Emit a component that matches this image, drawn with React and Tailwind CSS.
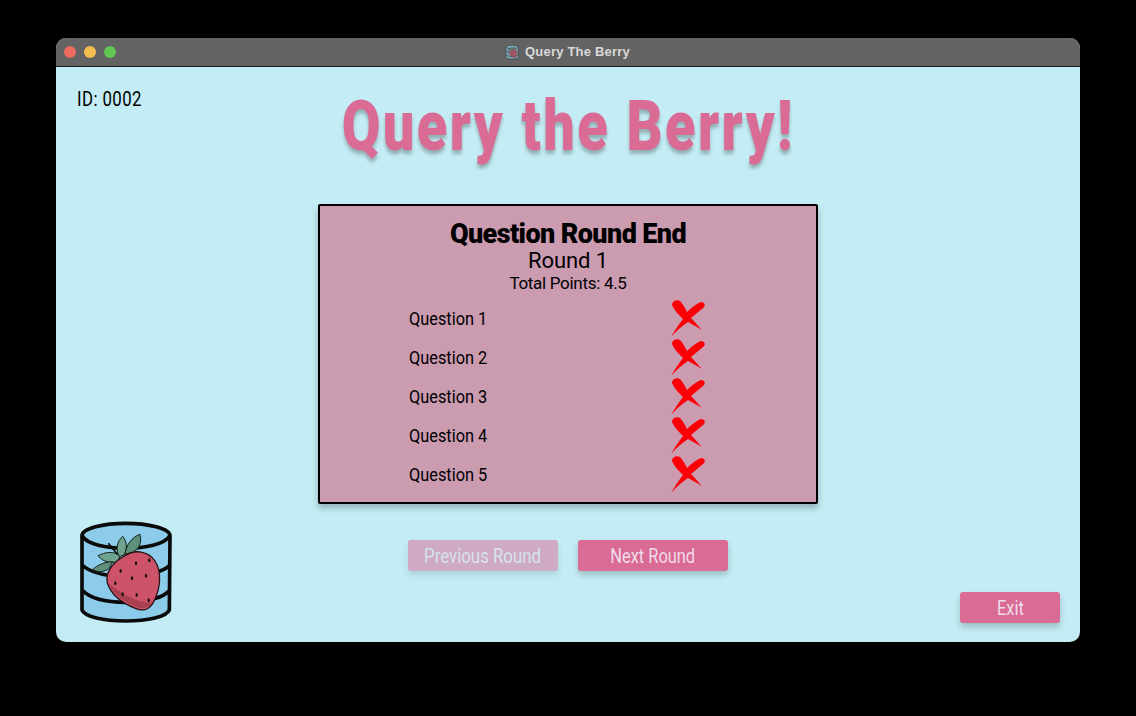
import React from 'react';

const questions = ['Question 1', 'Question 2', 'Question 3', 'Question 4', 'Question 5'];

const WrongMark = () => (
  <svg width="38" height="38" viewBox="0 0 38 38" className="block">
    <path fill="#fb0007" d="M3 6 C3 2 8 0 11 2 C14 5 16 9 18 13 C22 9 27 5 32 3 C36 3 37 7 34 9 C30 12 26 16 22 19 C26 23 29 27 33 31 C28 28 23 25 19 23 C13 27 7 32 2 38 C6 31 10 25 14 20 C10 16 5 11 3 6 Z" />
  </svg>
);

const BerryIcon = ({ small }) => (
  <svg viewBox="0 0 330 336" width={small ? 16 : 110} height={small ? 16 : 112} className="block shrink-0">
    <path d="M36 62 C36 40 100 25 167 25 C234 25 300 40 300 62 L298 285 C290 305 234 318 167 318 C100 318 44 305 36 285 Z" fill="#8ccbe9" stroke="#0a0a0a" strokeWidth="11" />
    <path d="M36 62 C50 88 110 100 167 100 C224 100 285 88 300 62" fill="none" stroke="#0a0a0a" strokeWidth="11" />
    <path d="M36 150 C60 172 110 184 167 184 C224 184 280 172 300 150" fill="none" stroke="#0a0a0a" strokeWidth="11" />
    <path d="M36 225 C60 250 110 262 167 262 C224 262 280 250 300 225" fill="none" stroke="#0a0a0a" strokeWidth="11" />
    <path d="M148 125 L115 85" fill="none" stroke="#0a0a0a" strokeWidth="5" />
    <path d="M150 125 C132 105 105 112 84 122 C100 142 125 146 142 140 Z" fill="#6fa58e" stroke="#14201a" strokeWidth="3" />
    <path d="M128 140 C105 140 82 150 68 164 C88 174 105 170 118 160 Z" fill="#5f9079" stroke="#14201a" strokeWidth="3" />
    <path d="M148 125 C136 105 140 80 158 64 C172 80 172 104 162 120 Z" fill="#6fa58e" stroke="#14201a" strokeWidth="3" />
    <path d="M165 118 C168 90 186 66 210 58 C216 82 208 102 188 112 Z" fill="#5f9079" stroke="#14201a" strokeWidth="3" />
    <path d="M165 122 C195 102 235 108 255 138 C276 170 272 222 250 262 C238 284 218 290 196 280 C160 266 124 240 112 204 C104 170 132 140 165 122 Z" fill="#cd5468" stroke="#2a1216" strokeWidth="4" />
    <path d="M116 205 C130 238 165 262 198 276 C218 284 236 280 248 262 C220 268 170 250 116 205 Z" fill="#a9404f" />
    <g fill="#1a1014">
      <ellipse cx="198" cy="145" rx="3.5" ry="6" />
      <ellipse cx="238" cy="136" rx="3.5" ry="6" />
      <ellipse cx="152" cy="168" rx="3.5" ry="6" />
      <ellipse cx="228" cy="182" rx="3.5" ry="6" />
      <ellipse cx="186" cy="190" rx="3.5" ry="6" />
      <ellipse cx="136" cy="205" rx="3.5" ry="6" />
      <ellipse cx="158" cy="238" rx="3.5" ry="6" />
      <ellipse cx="200" cy="240" rx="3.5" ry="6" />
      <ellipse cx="236" cy="256" rx="3.5" ry="6" />
    </g>
  </svg>
);

const App = () => {
  return (
    <div className="w-[1136px] h-[716px] bg-black pt-[38px] pl-14 font-['Roboto',sans-serif]">
      <div className="w-[1024px] h-[604px] rounded-[10px] overflow-hidden flex flex-col bg-[#c4ecf4]">
        <div className="h-[29px] shrink-0 bg-[#636363] border-b border-[#1c1c1c] flex items-center pl-2 relative">
          <div className="flex gap-2">
            <span className="w-3 h-3 rounded-full bg-[#ec6a5e]" />
            <span className="w-3 h-3 rounded-full bg-[#f4bf4f]" />
            <span className="w-3 h-3 rounded-full bg-[#61c554]" />
          </div>
          <div className="flex-1 flex justify-center items-center gap-[5px] pr-[62px]">
            <div className="opacity-60"><BerryIcon small /></div>
            <span className="text-[13px] font-bold tracking-[0.2px] text-[#d9d9d9] font-['Liberation_Sans',sans-serif]">Query The Berry</span>
          </div>
        </div>

        <div className="flex-1 flex flex-col">
          <div className="grid grid-cols-[1fr_auto_1fr] h-[137px]">
            <div className="pl-[21px] pt-[20px] text-[20px] leading-[24px] text-black">
              <span className="inline-block origin-left scale-x-[0.84] tracking-[0.5px]">ID: 0002</span>
            </div>
            <div className="pt-[24px] w-[450px] flex justify-center">
              <h1 className="text-[70px] leading-[70px] font-black tracking-[3px] whitespace-nowrap scale-x-[0.8] text-[#da6b95] [text-shadow:0_4px_4px_rgba(0,0,0,0.25)]">Query the Berry!</h1>
            </div>
            <div />
          </div>

          <div className="w-[500px] h-[300px] mx-auto bg-[#cb9bb0] border-2 border-black rounded-[2px] shadow-[0_4px_6px_rgba(0,0,0,0.25)] flex flex-col items-center pt-[11px]">
            <h2 className="text-[27px] leading-[34px] font-black tracking-[-0.6px] text-black">Question Round End</h2>
            <div className="text-[22px] leading-[20px] tracking-[-0.1px] text-black">Round 1</div>
            <div className="text-[17px] leading-[20px] mt-[2px] tracking-[-0.3px] text-black">Total Points: 4.5</div>
            <div className="w-[298px] ml-[-20px] mt-[6px] flex flex-col gap-px">
              {questions.map((q) => (
                <div key={q} className="h-[38px] flex items-center justify-between text-[19px] text-black">
                  <span className="pt-[3px] origin-left scale-x-[0.86]">{q}</span>
                  <WrongMark />
                </div>
              ))}
            </div>
          </div>

          <div className="grid grid-cols-[1fr_auto_1fr] flex-1 mt-[11px] pb-[15px]">
            <div className="pl-[14px] flex items-end"><BerryIcon /></div>
            <div className="flex gap-5 pt-[25px]">
              <button className="w-[150px] h-[31px] rounded-[3px] bg-[#da6b95] text-[#e8dcea] text-[20px] opacity-50 shadow-[0_4px_6px_rgba(0,0,0,0.2)]">
                <span className="inline-block scale-x-[0.84]">Previous Round</span>
              </button>
              <button className="w-[150px] h-[31px] rounded-[3px] bg-[#da6b95] text-[#f0dcea] text-[20px] shadow-[0_4px_6px_rgba(0,0,0,0.2)]">
                <span className="inline-block scale-x-[0.82]">Next Round</span>
              </button>
            </div>
            <div className="flex items-end justify-end pr-5 pb-1">
              <button className="w-[100px] h-[31px] rounded-[3px] bg-[#da6b95] text-[#f0dcea] text-[20px] shadow-[0_4px_6px_rgba(0,0,0,0.2)]">
                <span className="inline-block scale-x-[0.82]">Exit</span>
              </button>
            </div>
          </div>
        </div>
      </div>
    </div>
  );
};

export default App;
